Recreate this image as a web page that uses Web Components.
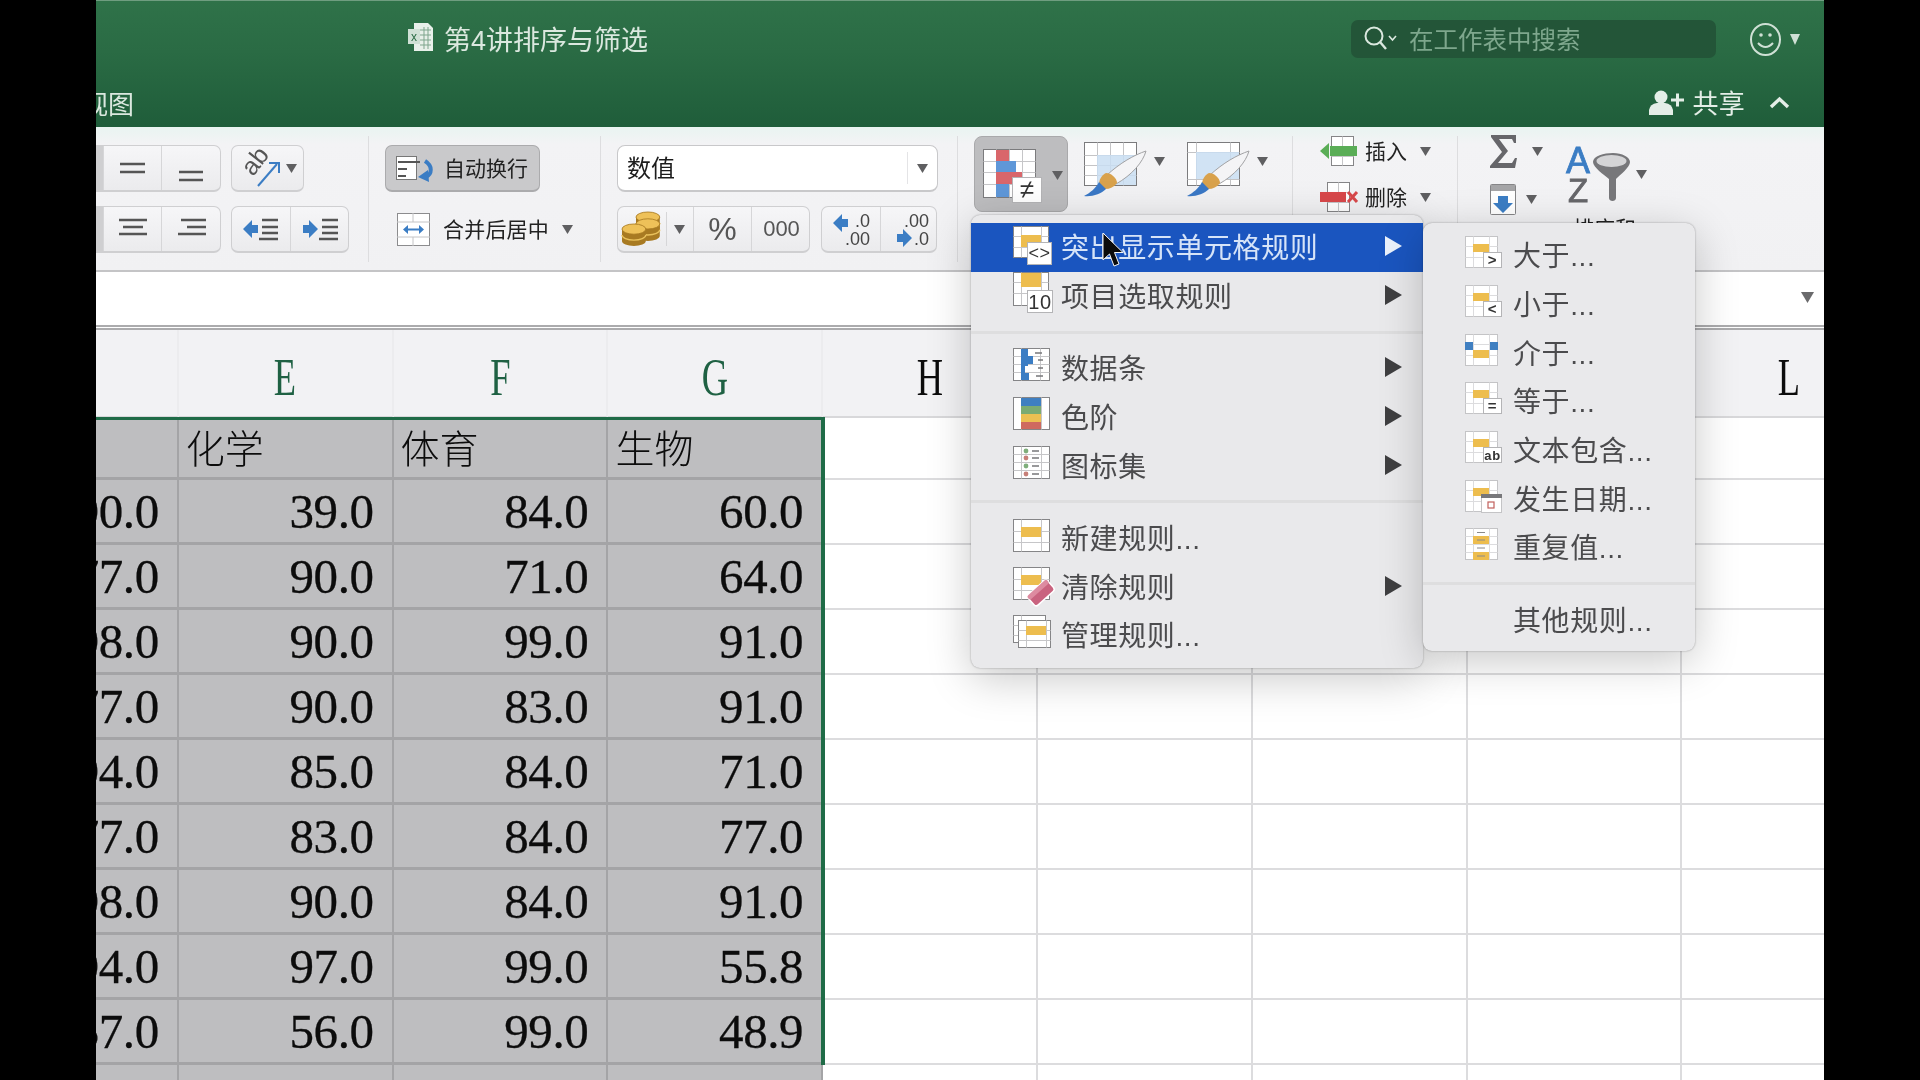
<!DOCTYPE html>
<html lang="zh">
<head>
<meta charset="utf-8">
<title>第4讲排序与筛选</title>
<style>
    html, body { margin: 0; height: 100%; background: #000; overflow: hidden; }
    body { display: flex; justify-content: center; font-family: "Liberation Sans", "Noto Sans CJK SC", sans-serif; }
</style>
</head>
<body>
<xl-window>
    <xl-titlebar></xl-titlebar>
    <xl-ribbon></xl-ribbon>
    <xl-formula></xl-formula>
    <xl-sheet></xl-sheet>

    <xl-menu style="left:875px;top:215px;width:452px;z-index:5;padding:8px 0">
        <xl-item icon="highlight" arrow selected>突出显示单元格规则</xl-item>
        <xl-item icon="top10" arrow>项目选取规则</xl-item>
        <xl-sep></xl-sep>
        <xl-item icon="databar" arrow>数据条</xl-item>
        <xl-item icon="scale" arrow>色阶</xl-item>
        <xl-item icon="iconset" arrow>图标集</xl-item>
        <xl-sep></xl-sep>
        <xl-item icon="newrule">新建规则...</xl-item>
        <xl-item icon="clear" arrow>清除规则</xl-item>
        <xl-item icon="manage">管理规则...</xl-item>
    </xl-menu>

    <xl-menu style="left:1327px;top:223px;width:272px;z-index:6;padding:8px 0 7px">
        <xl-item icon="gt">大于...</xl-item>
        <xl-item icon="lt">小于...</xl-item>
        <xl-item icon="between">介于...</xl-item>
        <xl-item icon="eq">等于...</xl-item>
        <xl-item icon="ab">文本包含...</xl-item>
        <xl-item icon="date">发生日期...</xl-item>
        <xl-item icon="dup">重复值...</xl-item>
        <xl-sep></xl-sep>
        <xl-item>其他规则...</xl-item>
    </xl-menu>

    <xl-cursor></xl-cursor>
</xl-window>

<script>
const SANS = '"Liberation Sans", "Noto Sans CJK SC", sans-serif';

// a little spreadsheet tile, used by most of the icons
function tile(x, y, w, h, xs, ys, stroke = '#858587', line = '#c6c6c8') {
    let out = `<rect x="${x}" y="${y}" width="${w}" height="${h}" fill="#fff" stroke="${stroke}"/>`;
    xs.forEach(v => { out += `<path d="M${x + v} ${y}V${y + h}" stroke="${line}" fill="none"/>`; });
    ys.forEach(v => { out += `<path d="M${x} ${y + v}H${x + w}" stroke="${line}" fill="none"/>`; });
    return out;
}
const tri = (cls = '') => `<svg class="tri ${cls}" width="11" height="9" viewBox="0 0 11 9"><path d="M0 0H11L5.5 9Z" fill="#5f5f61"/></svg>`;
const svg = (w, h, body, extra = '') => `<svg width="${w}" height="${h}" viewBox="0 0 ${w} ${h}" style="overflow:visible;display:block" ${extra}>${body}</svg>`;
const YELLOW = '#edbd4e';

function badge(x, y, w, h, label, size, dy = 0, weight = 700) {
    return `<rect x="${x}" y="${y}" width="${w}" height="${h}" fill="#fff" stroke="#b4b4b6"/>` +
        `<text x="${x + w / 2}" y="${y + h / 2 + size * 0.36 + dy}" text-anchor="middle" font-family="Liberation Sans" font-weight="${weight}" font-size="${size}" fill="#333">${label}</text>`;
}
function subBase(mark) {
    return tile(0.5, 2.5, 32, 31, [8, 24], [10, 21], '#c4c4c6', '#dcdcde') + `<rect x="8" y="10" width="16" height="8" fill="${YELLOW}"/>` + mark;
}

const ICONS = {
    highlight: tile(0.5, 0.5, 35, 31, [8, 28], [10, 21]) + `<rect x="8" y="9" width="20" height="12" fill="${YELLOW}"/>` + badge(14.5, 16.5, 24, 22, '&lt;&gt;', 18, -1, 400),
    top10: tile(0.5, -2.5, 35, 33, [8, 28], [10, 21]) + `<rect x="8" y="-2" width="20" height="14" fill="${YELLOW}"/>` + badge(14.5, 15.5, 25, 22, '10', 20, 0, 400),
    databar: tile(0.5, 1.5, 36, 32, [8, 27], [8, 16, 24]) +
        `<path d="M8 2H15V9H20V17H15V19H12V27H8Z" fill="#3b7dc4"/><path d="M8 26H16V33H8Z" fill="#3b7dc4"/>` +
        `<path d="M22 6h7M25 13h5M25 21h5M23 29h7" stroke="#77777a" stroke-width="1.5"/>`,
    scale: tile(0.5, 1.5, 36, 32, [8, 28], []) +
        `<rect x="8" y="2" width="20" height="8" fill="#3f7fc1"/><rect x="8" y="10" width="20" height="8" fill="#7cab72"/><rect x="8" y="18" width="20" height="8" fill="#ecc052"/><rect x="8" y="26" width="20" height="7" fill="#cf6a60"/>`,
    iconset: tile(0.5, 1.5, 36, 32, [8, 28], [8, 16, 24]) +
        `<circle cx="13" cy="6" r="2.4" fill="#7fae7b"/><circle cx="13" cy="13" r="2.4" fill="#c77f78"/><circle cx="13" cy="21" r="2.4" fill="#7fae7b"/><circle cx="13" cy="29" r="2.4" fill="#c77f78"/>` +
        `<path d="M19 6h7M19 13h7M19 21h7M19 29h7" stroke="#77777a" stroke-width="1.5"/>`,
    newrule: tile(0.5, 2.5, 36, 32, [8, 28], [12, 23]) + `<rect x="8" y="10" width="20" height="10" fill="${YELLOW}"/>`,
    clear: tile(0.5, 1.5, 36, 32, [8, 28], [12, 23]) + `<rect x="8" y="9" width="20" height="10" fill="${YELLOW}"/>` +
        `<g transform="rotate(-42 28 27)"><rect x="15" y="20" width="26" height="14" rx="3" fill="#c9637f" stroke="#fff" stroke-width="1.5"/><rect x="15" y="20" width="26" height="5" rx="2" fill="#dd8ba0"/></g>`,
    manage: tile(0.5, 1.5, 32, 27, [8], [10, 20]) + tile(5.5, 6.5, 32, 27, [8, 28], [10, 20]) + `<rect x="13" y="12" width="20" height="9" fill="${YELLOW}"/>`,
    gt: subBase(badge(18.5, 18.5, 18, 15, '&gt;', 15)),
    lt: subBase(badge(18.5, 18.5, 18, 15, '&lt;', 15)),
    between: tile(0.5, 2.5, 32, 31, [8, 24], [10, 21], '#c4c4c6', '#dcdcde') + `<rect x="0" y="10" width="8" height="8" fill="#3f7fc1"/><rect x="25" y="10" width="8" height="8" fill="#3f7fc1"/><rect x="8" y="18" width="16" height="8" fill="${YELLOW}"/>`,
    eq: subBase(badge(18.5, 18.5, 18, 15, '=', 15)),
    ab: subBase(badge(18.5, 18.5, 18, 15, 'ab', 13)),
    date: subBase(`<rect x="16.5" y="16.5" width="20" height="18" fill="#fff" stroke="#c4c4c6"/><rect x="16" y="16" width="21" height="4" fill="#77777a"/><rect x="23" y="24" width="6" height="6" fill="#fff" stroke="#c2605c" stroke-width="1.2"/>`),
    dup: tile(0.5, 2.5, 32, 31, [8, 24], [8, 16, 24], '#c4c4c6', '#dcdcde') + `<rect x="8" y="10" width="16" height="8" fill="${YELLOW}"/><rect x="8" y="26" width="16" height="8" fill="${YELLOW}"/><path d="M12 6.5h8M12 14h8M12 22h8M12 30h8" stroke="#8a8a8a" stroke-width="1"/>`
};

class XlWindow extends HTMLElement {
    connectedCallback() {
        this.attachShadow({ mode: 'open' });
        this.shadowRoot.innerHTML = `
            <style>
                :host { display: flex; flex-direction: column; position: relative; width: 1728px; height: 1080px; overflow: hidden; background: #fff; flex: none; filter: blur(.45px); }
            </style>
            <slot></slot>`;
    }
}

class XlTitlebar extends HTMLElement {
    connectedCallback() {
        this.attachShadow({ mode: 'open' });
        this.shadowRoot.innerHTML = `
            <style>
                :host { display: block; height: 127px; flex: none; box-sizing: border-box; background: linear-gradient(#2f7249, #2a6b44 40%, #1f5d3a); border-top: 1px solid #6f9d80; font-family: ${SANS}; color: #dde9e1; overflow: hidden; }
                .top { display: flex; align-items: center; height: 79px; padding: 0 24px 0 312px; }
                .doc { margin-right: 10px; }
                .name { font-size: 27px; margin-top: -4px; color: #dbe8df; }
                .search { margin-left: auto; width: 365px; height: 38px; margin-top: -3px; background: #235538; border-radius: 7px; display: flex; align-items: center; box-sizing: border-box; padding-left: 12px; }
                .search span { font-size: 24.5px; color: #7ea78d; margin: -2px 0 0 12px; }
                .smile { margin-left: 34px; margin-top: -3px; }
                .smtri { margin-left: 9px; margin-top: -3px; }
                .bottom { display: flex; align-items: center; height: 47px; margin-top: 0; padding-right: 34px; }
                .tab { font-size: 26px; margin: -3px 0 0 -14px; color: #dbe8df; }
                .share { margin-left: auto; margin-top: -2px; }
                .shtext { font-size: 26px; margin: -4px 0 0 8px; color: #e4eee7; letter-spacing: .3px; }
                .chev { margin-left: 24px; margin-top: -2px; }
            </style>
            <div class="top">
                <span class="doc">${svg(26, 30, `<path d="M6 1H20L25 6V29H6Z" fill="#e8f0ea"/><path d="M12 8h11M12 13h11M12 18h11M12 23h11M16 5V27M20 5V27" stroke="#7fa58d" stroke-width="1"/><rect x="0" y="7" width="12" height="15" fill="#cfe0d5"/><text x="6" y="19" text-anchor="middle" font-family="Liberation Sans" font-size="12" fill="#2a6b44">x</text>`, 'transform="translate(0 -4)"')}</span>
                <span class="name">第4讲排序与筛选</span>
                <div class="search">
                    ${svg(34, 28, `<circle cx="11" cy="11" r="8.5" fill="none" stroke="#dbe8df" stroke-width="2"/><path d="M17 17L23 24" stroke="#dbe8df" stroke-width="2.4"/><path d="M26 11l3.5 4 3.5-4" fill="none" stroke="#dbe8df" stroke-width="1.6"/>`)}
                    <span>在工作表中搜索</span>
                </div>
                <span class="smile">${svg(31, 33, `<ellipse cx="15.5" cy="16.5" rx="14.5" ry="15.5" fill="none" stroke="#cfe0d5" stroke-width="2"/><circle cx="11" cy="12" r="1.8" fill="#cfe0d5"/><circle cx="20" cy="12" r="1.8" fill="#cfe0d5"/><path d="M8 20q7.5 8 15 0" fill="none" stroke="#cfe0d5" stroke-width="2"/>`)}</span>
                <span class="smtri">${svg(10, 11, `<path d="M0 0H10L5 11Z" fill="#cfe0d5"/>`)}</span>
            </div>
            <div class="bottom">
                <span class="tab">视图</span>
                <span class="share">${svg(35, 26, `<circle cx="12" cy="7" r="6.5" fill="#e4eee7"/><path d="M0 25V20Q1 14 8 13H16Q23 14 24 20V25Z" fill="#e4eee7"/><path d="M22 10H35M28.5 3.5V16.5" stroke="#e4eee7" stroke-width="3"/>`)}</span>
                <span class="shtext">共享</span>
                <span class="chev">${svg(21, 11, `<path d="M2 10L10.5 2L19 10" fill="none" stroke="#e4eee7" stroke-width="3.4"/>`)}</span>
            </div>`;
    }
}

class XlRibbon extends HTMLElement {
    connectedCallback() {
        this.attachShadow({ mode: 'open' });
        const lines = (rows) => svg(28, 22, rows.map(r => `<path d="M${r[0]} ${r[2]}H${r[1]}" stroke="#555" stroke-width="2.4"/>`).join(''));
        const arrow = (dir, color = '#3b7dc4') => dir === 'l'
            ? `<path d="M0 10L9 1V6H15V14H9V19Z" fill="${color}"/>`
            : `<path d="M15 10L6 1V6H0V14H6V19Z" fill="${color}"/>`;
        const coin = (x, y) => `<path d="M${x} ${y}v14a14 6 0 0 0 28 0v-14" fill="#a87a22"/><path d="M${x} ${y + 7}a14 6 0 0 0 28 0" fill="none" stroke="#e9c15c" stroke-width="1.6"/><ellipse cx="${x + 14}" cy="${y}" rx="14" ry="6" fill="#eec159" stroke="#a87a22"/>`;
        const brush = (fillRect) => svg(63, 55,
            tile(0.5, 0.5, 52, 43, fillRect.lines[0], fillRect.lines[1], '#7b7b7d', '#c4c4c6') +
            `<rect x="${fillRect.x}" y="${fillRect.y}" width="${fillRect.w}" height="${fillRect.h}" fill="#c9def2" opacity=".85"/>` +
            `<path d="M62 9C59 20 48 33 32 42L23 33C36 21 50 13 62 9Z" fill="#f4f4f6" stroke="#a2a2a4" stroke-width="1"/>` +
            `<path d="M22 31C27 31 33 36 33 41C30 45 26 47 21 47L15 41C16 36 18 33 22 31Z" fill="#d9a24c"/>` +
            `<path d="M15 40L22 47C17 52 8 55 0 54C6 51 12 46 15 40Z" fill="#3a78c6"/>`);
        this.shadowRoot.innerHTML = `
            <style>
                :host { display: flex; height: 145px; flex: none; box-sizing: border-box; background: linear-gradient(#e9f4f1, #f3f3f5 12%, #f1f1f3); border-bottom: 2px solid #c4c4c6; font-family: ${SANS}; color: #222; }
                .sep { width: 1px; height: 126px; margin-top: 9px; background: #dddddf; flex: none; }
                .grp { flex: none; box-sizing: border-box; }
                .stack { display: flex; flex-direction: column; gap: 14px; padding-top: 18px; }
                .row { display: flex; gap: 10px; height: 47px; align-items: center; }
                .seg { display: flex; height: 47px; box-sizing: border-box; border: 1px solid #cfcfd1; border-bottom-width: 2px; border-radius: 7px; background: linear-gradient(#f6f6f8, #ebebed); overflow: hidden; flex: none; }
                .seg.cut { border-left: 0; border-radius: 0 7px 7px 0; }
                .seg > div { display: flex; align-items: center; justify-content: center; border-right: 1px solid #d6d6d8; box-sizing: border-box; flex: none; }
                .seg > div:last-child { border-right: 0; }
                .seg .on { background: #cfcfd1; }
                .wrap { width: 155px; height: 47px; box-sizing: border-box; background: #c9c9cb; border: 1px solid #ababad; border-bottom-width: 2px; border-radius: 7px; display: flex; align-items: center; padding-left: 10px; font-size: 21px; }
                .wrap svg { margin-right: 8px; }
                .wrap span { margin-top: -3px; }
                .merge { display: flex; align-items: center; height: 47px; padding-left: 12px; font-size: 21px; }
                .merge .t { margin: -3px 0 0 13px; letter-spacing: .2px; }
                .merge .tri { margin-left: 13px; }
                .combo { width: 321px; height: 47px; box-sizing: border-box; background: #fff; border: 1px solid #c8c8ca; border-bottom-width: 2px; border-radius: 8px; display: flex; align-items: center; font-size: 24px; color: #1c1c1c; padding-left: 9px; }
                .combo span { margin-top: -3px; }
                .combo i { margin-left: auto; width: 1px; height: 32px; background: #e4e4e6; }
                .combo .tri { margin: 0 9px 0 9px; }
                .pct { font-size: 32px; color: #555; }
                .thou { font-size: 22px; color: #555; }
                .row2 { gap: 11px; }
                .cf { padding: 9px 0 0 16px; display: flex; align-items: flex-start; }
                .cfbtn { width: 94px; height: 76px; box-sizing: border-box; background: #bdbdbf; border: 1px solid #a9a9ab; border-radius: 8px; padding: 12px 0 0 8px; display: flex; flex: none; }
                .cfbtn .tri { margin: 22px 0 0 9px; }
                .paint { display: flex; align-items: flex-start; margin-top: 6px; flex: none; }
                .paint .tri { margin: 15px 0 0 7px; }
                .cells { padding: 9px 0 0 27px; display: flex; flex-direction: column; gap: 16px; }
                .cellrow { display: flex; align-items: center; height: 30px; font-size: 21px; }
                .cellrow .t { margin: -2px 0 0 8px; }
                .cellrow .tri { margin-left: 13px; }
                .edit { padding: 8px 0 0 32px; display: flex; }
                .editcol { width: 77px; display: flex; flex-direction: column; gap: 15px; flex: none; }
                .erow { display: flex; align-items: center; height: 33px; }
                .erow .tri { margin-left: 15px; }
                .erow.fill .tri { margin-left: 10px; }
                .sort { margin-top: 10px; width: 90px; font-size: 21px; flex: none; }
                .sort .ic { display: flex; align-items: center; }
                .sort .ic .tri { margin-left: 5px; margin-top: 0; }
                .sort .lb { line-height: 30px; margin: 11px 0 0 6px; }
            </style>

            <div class="grp stack" style="width:272px">
                <div class="row">
                    <div class="seg cut" style="width:125px">
                        <div class="on" style="width:8px"></div>
                        <div style="width:58px">${lines([[1, 26, 7], [1, 26, 15]])}</div>
                        <div style="width:59px">${lines([[1, 25, 15], [1, 25, 23]])}</div>
                    </div>
                    <div class="seg" style="width:73px">
                        <div style="width:72px;gap:4px;padding-left:6px">${svg(36, 38, `<text x="0" y="0" font-family="Liberation Sans" font-size="25" fill="#555" transform="translate(7 28) rotate(-52)">ab</text><path d="M12 37L31 15" stroke="#3b7dc4" stroke-width="2"/><path d="M23 14H33V24" fill="none" stroke="#3b7dc4" stroke-width="2"/>`)}${tri()}</div>
                    </div>
                </div>
                <div class="row">
                    <div class="seg cut" style="width:125px">
                        <div class="on" style="width:8px"></div>
                        <div style="width:58px">${lines([[0, 28, 2], [4, 24, 9], [0, 28, 16]])}</div>
                        <div style="width:59px">${lines([[3, 28, 2], [9, 28, 9], [0, 28, 16]])}</div>
                    </div>
                    <div class="seg" style="width:118px">
                        <div style="width:59px">${svg(36, 24, `<g transform="translate(0 2)">${arrow('l')}</g><path d="M19 3H35M19 10H35M19 16H35M16 22H35" stroke="#555" stroke-width="2.4"/>`)}</div>
                        <div style="width:59px">${svg(36, 24, `<g transform="translate(0 2)">${arrow('r')}</g><path d="M19 3H35M19 10H35M19 16H35M16 22H35" stroke="#555" stroke-width="2.4"/>`)}</div>
                    </div>
                </div>
            </div>
            <div class="sep"></div>

            <div class="grp stack" style="width:231px;padding-left:16px">
                <div class="wrap">${svg(40, 24, `<rect x="0.5" y="0.5" width="20" height="23" fill="#fff" stroke="#777"/><path d="M2 6H24M2 13H11M2 20H10" stroke="#555" stroke-width="2"/><path d="M29 5C37 10 36 18 30 21" fill="none" stroke="#3b7dc4" stroke-width="4"/><path d="M33 26L22 21L32 14Z" fill="#3b7dc4"/>`)}<span>自动换行</span></div>
                <div class="merge">${svg(33, 33, `<rect x="0.5" y="0.5" width="32" height="32" fill="#fff" stroke="#8c8c8e"/><path d="M0 9H33M0 24H33M16 0V9M16 24V33" stroke="#c4c4c6" fill="none"/><path d="M8 16.5H25" stroke="#3b7dc4" stroke-width="2"/><path d="M11 12L6 16.5L11 21ZM22 12L27 16.5L22 21Z" fill="#3b7dc4"/>`)}<span class="t">合并后居中</span>${tri()}</div>
            </div>
            <div class="sep"></div>

            <div class="grp stack" style="width:356px;padding-left:16px">
                <div class="combo"><span>数值</span><i></i>${tri()}</div>
                <div class="row row2">
                    <div class="seg" style="width:193px">
                        <div style="width:76px;gap:0;justify-content:flex-start;padding-left:4px">
                            ${svg(40, 34, `<g transform="translate(14 0) scale(.85)">${coin(0, 6)}${coin(0, 14)}</g><g transform="translate(0 12) scale(.85)">${coin(0, 6)}</g>`)}
                            <span style="width:1px;height:34px;background:#d6d6d8;margin:0 7px 0 4px"></span>${tri()}
                        </div>
                        <div style="width:58px"><span class="pct">%</span></div>
                        <div style="width:59px"><span class="thou">000</span></div>
                    </div>
                    <div class="seg" style="width:116px">
                        <div style="width:59px">${svg(42, 34, `<g transform="translate(3 1)">${arrow('l')}</g><text x="40" y="15" text-anchor="end" font-family="Liberation Sans" font-size="18" fill="#444">.0</text><text x="40" y="33" text-anchor="end" font-family="Liberation Sans" font-size="18" fill="#444">.00</text>`)}</div>
                        <div style="width:57px">${svg(42, 34, `<text x="40" y="15" text-anchor="end" font-family="Liberation Sans" font-size="18" fill="#444">.00</text><g transform="translate(8 16)">${arrow('r')}</g><text x="40" y="33" text-anchor="end" font-family="Liberation Sans" font-size="18" fill="#444">.0</text>`)}</div>
                    </div>
                </div>
            </div>
            <div class="sep"></div>

            <div class="grp cf" style="width:334px">
                <div class="cfbtn">
                    ${svg(60, 56, tile(0.5, 0.5, 52, 48, [13, 26, 39], [12, 23, 35], '#7b7b7d', '#c6c6c8') +
                        `<rect x="13" y="1" width="13" height="11" fill="#d9666b"/><rect x="13" y="12" width="20" height="11" fill="#5f97d8"/><rect x="13" y="23" width="26" height="12" fill="#d9666b"/><rect x="13" y="35" width="13" height="13" fill="#5f97d8"/>` +
                        badge(29.5, 28.5, 29, 25, '≠', 26, -1, 400))}
                    ${tri()}
                </div>
                <div class="paint" style="margin-left:16px">${brush({ x: 13, y: 13, w: 39, h: 30, lines: [[13, 26, 39], [13, 23, 33]] })}${tri()}</div>
                <div class="paint" style="margin-left:22px">${brush({ x: 9, y: 10, w: 43, h: 27, lines: [[9, 43], [10, 37]] })}${tri()}</div>
            </div>
            <div class="sep"></div>

            <div class="grp cells" style="width:164px">
                <div class="cellrow">${svg(37, 30, tile(11.5, 0.5, 22, 29, [11], [10, 20]) + `<rect x="10" y="10" width="27" height="10" fill="#5aad56"/><path d="M37 10H10V20H37ZM0 15L9 7V23Z" fill="#5aad56"/>`)}<span class="t">插入</span>${tri()}</div>
                <div class="cellrow">${svg(37, 30, tile(7.5, 0.5, 22, 29, [11], [10, 20]) + `<rect x="0" y="10" width="26" height="10" fill="#d9484b"/><path d="M28 10L37 20M37 10L28 20" stroke="#d9484b" stroke-width="3"/>`)}<span class="t">删除</span>${tri()}</div>
            </div>
            <div class="sep"></div>

            <div class="grp edit" style="flex:1">
                <div class="editcol">
                    <div class="erow">${svg(27, 33, `<path d="M1 0H26V8H24L22 4H9L18 16L8 28H22L25 23H27L25 33H0V31L12 17L1 2Z" fill="#66666a"/>`)}${tri()}</div>
                    <div class="erow fill">${svg(26, 31, `<rect x="0.5" y="0.5" width="25" height="30" rx="1" fill="#fff" stroke="#858587"/><rect x="1" y="1" width="24" height="6" fill="#a5a5a7"/><path d="M8 12H18V19H23L13 29L3 19H8Z" fill="#3b7dc4"/>`)}${tri()}</div>
                </div>
                <div class="sort">
                    <div class="ic">${svg(64, 58, `<text x="-1" y="28" font-family="Liberation Sans" font-weight="400" font-size="36" fill="#3b7dc4" stroke="#3b7dc4" stroke-width=".8">A</text><text x="1" y="57" font-family="Liberation Sans" font-weight="400" font-size="33" fill="#66666a" stroke="#66666a" stroke-width=".8">Z</text><path d="M26 17C26 11 37 8 46 8C55 8 63 12 63 17C63 22 53 30 49 34V53C49 57 42 57 42 53V34C37 30 26 22 26 17Z" fill="#77777a"/><ellipse cx="44.5" cy="16" rx="15" ry="6" fill="#d4d4d6"/>`)}${tri()}</div>
                    <div class="lb">排序和</div>
                </div>
            </div>`;
    }
}

class XlFormula extends HTMLElement {
    connectedCallback() {
        this.attachShadow({ mode: 'open' });
        this.shadowRoot.innerHTML = `
            <style>
                :host { display: flex; align-items: center; justify-content: flex-end; height: 58px; flex: none; box-sizing: border-box; background: #fff; padding: 0 10px 3px 0; border-bottom: 5px double #ababad; }
            </style>
            ${svg(13, 11, `<path d="M0 0H13L6.5 11Z" fill="#6a6a6c"/>`)}`;
    }
}

class XlSheet extends HTMLElement {
    connectedCallback() {
        this.attachShadow({ mode: 'open' });
        const data = [
            ['90.0', '39.0', '84.0', '60.0'],
            ['77.0', '90.0', '71.0', '64.0'],
            ['98.0', '90.0', '99.0', '91.0'],
            ['77.0', '90.0', '83.0', '91.0'],
            ['94.0', '85.0', '84.0', '71.0'],
            ['77.0', '83.0', '84.0', '77.0'],
            ['98.0', '90.0', '84.0', '91.0'],
            ['94.0', '97.0', '99.0', '55.8'],
            ['57.0', '56.0', '99.0', '48.9'],
            ['77.0', '90.0', '65.0', '91.0']
        ];
        const heads = ['', 'E', 'F', 'G', 'H', '', '', '', 'L'];
        const blanks = '<div class="c"></div>'.repeat(5);
        this.shadowRoot.innerHTML = `
            <style>
                :host { display: block; flex: 1; min-height: 0; overflow: hidden; font-family: "Liberation Serif", "Noto Sans CJK SC", serif; color: #0c0c0c; }
                .grid { display: grid; position: relative; grid-template-columns: repeat(9, 214.8px); grid-template-rows: 88px 62px; grid-auto-rows: 65px; margin-left: -132px; width: max-content; }
                .h { background: #f2f2f4; border-right: 2px solid #ececee; display: flex; align-items: center; justify-content: center; font-size: 52px; padding-top: 9px; box-sizing: border-box; border-bottom: 2px solid #d8d8da; }
                .h span { display: inline-block; transform: scaleX(.7); }
                .h.g { color: #1f6143; }
                .c { box-sizing: border-box; border-right: 2px solid #dcdcde; border-bottom: 2px solid #dcdcde; background: #fff; }
                .s { box-sizing: border-box; background: #bebec0; border-right: 2px solid #a4a4a6; border-bottom: 3px solid #a4a4a6; font-size: 49px; letter-spacing: -.4px; -webkit-text-stroke: .3px #0c0c0c; display: flex; align-items: center; justify-content: flex-end; padding-right: 18px; }
                .s.t { justify-content: flex-start; padding: 0 0 3px 7px; font-size: 39px; letter-spacing: 0; -webkit-text-stroke: 0; font-weight: 300; }
                .sel { position: absolute; grid-column: 1 / 5; grid-row: 2 / 12; top: -1px; left: 0; right: -2px; bottom: 0; border: solid #1f6b47; border-width: 3px 4px 0 0; pointer-events: none; z-index: 2; }
            </style>
            <div class="grid">
                ${heads.map((h, i) => `<div class="h ${i > 0 && i < 4 ? 'g' : ''}"><span>${h}</span></div>`).join('')}
                <div class="s t"></div><div class="s t">化学</div><div class="s t">体育</div><div class="s t">生物</div>${blanks}
                ${data.map(r => r.map(v => `<div class="s">${v}</div>`).join('') + blanks).join('')}
                <div class="sel"></div>
            </div>`;
    }
}

class XlMenu extends HTMLElement {
    connectedCallback() {
        this.attachShadow({ mode: 'open' });
        this.shadowRoot.innerHTML = `
            <style>
                :host { display: block; position: absolute; box-sizing: border-box; background: #e9e9eb; border-radius: 9px; box-shadow: 0 0 2px rgba(0,0,0,.35), 0 10px 44px rgba(0,0,0,.22); font-family: ${SANS}; }
            </style>
            <slot></slot>`;
    }
}

class XlItem extends HTMLElement {
    connectedCallback() {
        this.attachShadow({ mode: 'open' });
        const icon = ICONS[this.getAttribute('icon')] || '';
        const sel = this.hasAttribute('selected');
        this.shadowRoot.innerHTML = `
            <style>
                :host { display: flex; align-items: center; height: 48.7px; box-sizing: border-box; padding: 0 21px 0 42px; font-size: 28px; letter-spacing: .6px; color: ${sel ? '#d6e4f8' : '#4b4b4d'}; background: ${sel ? '#1a55bf' : 'transparent'}; }
                .i { width: 48px; height: 40px; flex: none; margin-top: -2px; }
                .a { margin-left: auto; margin-top: -2px; }
                .t { white-space: nowrap; margin-top: -2px; }
            </style>
            <div class="i">${svg(40, 40, icon)}</div>
            <span class="t"><slot></slot></span>
            ${this.hasAttribute('arrow') ? `<span class="a">${svg(17, 20, `<path d="M0 0L17 10L0 20Z" fill="${sel ? '#eaf1fb' : '#3f3f41'}"/>`)}</span>` : ''}`;
    }
}

class XlSep extends HTMLElement {
    connectedCallback() {
        this.attachShadow({ mode: 'open' });
        this.shadowRoot.innerHTML = `
            <style>
                :host { display: flex; align-items: center; height: 23.6px; }
                div { width: 100%; height: 3px; background: #dededf; }
            </style>
            <div></div>`;
    }
}

class XlCursor extends HTMLElement {
    connectedCallback() {
        this.attachShadow({ mode: 'open' });
        this.shadowRoot.innerHTML = `
            <style>
                :host { position: absolute; left: 1006px; top: 232px; z-index: 9; display: block; }
            </style>
            ${svg(22, 36, `<path d="M1 1V28L7.5 22L12 34L17 32L12.5 20.5H21Z" fill="#0c0c0c" stroke="#f4f4f4" stroke-width="1"/>`)}`;
    }
}

customElements.define('xl-window', XlWindow);
customElements.define('xl-titlebar', XlTitlebar);
customElements.define('xl-ribbon', XlRibbon);
customElements.define('xl-formula', XlFormula);
customElements.define('xl-sheet', XlSheet);
customElements.define('xl-menu', XlMenu);
customElements.define('xl-item', XlItem);
customElements.define('xl-sep', XlSep);
customElements.define('xl-cursor', XlCursor);
</script>
</body>
</html>
